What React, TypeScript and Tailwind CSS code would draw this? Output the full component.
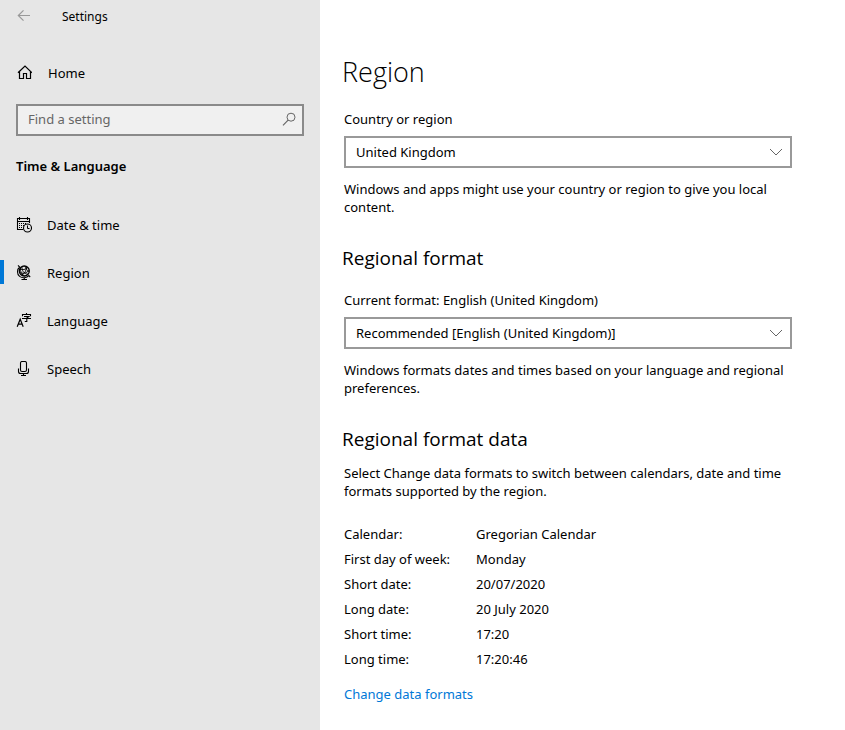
import type { ReactNode } from 'react';

const formats = [
  { label: 'Calendar:', value: 'Gregorian Calendar' },
  { label: 'First day of week:', value: 'Monday' },
  { label: 'Short date:', value: '20/07/2020' },
  { label: 'Long date:', value: '20 July 2020' },
  { label: 'Short time:', value: '17:20' },
  { label: 'Long time:', value: '17:20:46' },
];

function Icon({ children }: { children: ReactNode }) {
  return (
    <svg
      width="16"
      height="16"
      viewBox="0 0 16 16"
      fill="none"
      stroke="currentColor"
      strokeWidth="1"
      className="shrink-0"
      aria-hidden="true"
    >
      {children}
    </svg>
  );
}

function BackIcon() {
  return (
    <Icon>
      <path d="M14 6.5H2.5M7.5 1.3L2.3 6.5L7.5 11.7" strokeWidth="1.2" />
    </Icon>
  );
}

function HomeIcon() {
  return (
    <Icon>
      <path d="M2 7.8L9 1L16 7.8" strokeWidth="1.2" />
      <path d="M3.5 6.5V13.5H7.5V8.5H10.5V13.5H14.5V6.5" strokeWidth="1.2" />
    </Icon>
  );
}

function CalendarIcon() {
  return (
    <Icon>
      <path d="M7 12.5H1.5V1.5H13.5V6M1.5 4.5H13.5M3.5 0V3M11.5 0V3" strokeWidth="1.1" />
      <path d="M3 6.5H4M5 6.5H6M7 6.5H8M9 6.5H10M3 8.5H4M5 8.5H6M7 8.5H8M3 10.5H4M5 10.5H6" />
      <circle cx="11.5" cy="11" r="4" strokeWidth="1.1" />
      <path d="M11.5 8.5V11.5H13.5" />
    </Icon>
  );
}

function GlobeIcon() {
  return (
    <Icon>
      <circle cx="8.3" cy="6" r="5" strokeWidth="1.3" />
      <path
        d="M4 4C6 5.2 10 4.6 11.5 2.7M3.6 7C6 9.3 11 8.2 13 5.2M6 1.7C5.5 5 8 9.2 12 9.2M9 1.2C9.5 3 11 5.7 13 6.7M4.5 3.2C4 6 5.5 9.7 8.5 10.9M10.5 1.8C10.8 5 8.5 9 5.5 10"
        strokeWidth="0.9"
      />
      <path
        d="M2 0.4L3.6 2C0.8 4.4 0.8 9 3.6 11.4C6.5 13.6 10.8 13 12.8 10.6L14.2 12M8.3 13V14.5M5.5 14.5H11"
        strokeWidth="1.1"
      />
    </Icon>
  );
}

function LanguageIcon() {
  return (
    <Icon>
      <path d="M1.2 13.8L4.2 6.2L7.2 13.8M2.4 11.2H6" strokeWidth="1.2" />
      <path d="M10.5 0V1.5M6.5 3.2V1.5H14.5V3.2M8 3.5H12.8L10.8 5V8.5H8.8M6 5.5H15" strokeWidth="1.1" />
    </Icon>
  );
}

function MicIcon() {
  return (
    <Icon>
      <rect x="4.5" y="0.5" width="6" height="10" rx="1.5" strokeWidth="1.1" />
      <path
        d="M2.5 7.5V10.5C2.5 11.8 3.2 12.5 4.5 12.5H10.5C11.8 12.5 12.5 11.8 12.5 10.5V7.5M7.5 12.5V14.5M5 14.5H10"
        strokeWidth="1.1"
      />
    </Icon>
  );
}

function SearchIcon() {
  return (
    <Icon>
      <circle cx="11" cy="6.2" r="4" />
      <path d="M8.1 9.2L3 14.3" strokeWidth="1.2" />
    </Icon>
  );
}

const navItems = [
  { label: 'Date & time', icon: <CalendarIcon />, active: false },
  { label: 'Region', icon: <GlobeIcon />, active: true },
  { label: 'Language', icon: <LanguageIcon />, active: false },
  { label: 'Speech', icon: <MicIcon />, active: false },
];

function Dropdown({ id, value }: { id: string; value: string }) {
  return (
    <div className="relative mt-2">
      <select
        id={id}
        className="block h-8 w-full appearance-none border-2 border-[#999999] bg-white pr-8 pl-2.5 text-black"
      >
        <option>{value}</option>
      </select>
      <svg
        width="14"
        height="8"
        viewBox="0 0 14 8"
        fill="none"
        stroke="#666666"
        className="pointer-events-none absolute top-3 right-[9px]"
        aria-hidden="true"
      >
        <path d="M1 1L7 7L13 1" />
      </svg>
    </div>
  );
}

function Sidebar() {
  return (
    <aside className="w-80 shrink-0 bg-[#e6e6e6]">
      <header className="flex h-[34px] items-center">
        <button type="button" aria-label="Back" className="ml-4 text-[#999999]">
          <BackIcon />
        </button>
        <span className="ml-[30px] text-[12px]">Settings</span>
      </header>

      <a href="#home" className="mt-[15px] flex h-12 items-center gap-4 px-4">
        <HomeIcon />
        Home
      </a>

      <div className="mx-4 mt-[7px] flex h-8 items-center border-2 border-[#8a8a8a] bg-[#f0f0f0] pr-1.5 pb-0.5 pl-2.5 text-[#666666]">
        <input
          type="text"
          aria-label="Find a setting"
          placeholder="Find a setting"
          className="h-[18px] min-w-0 flex-1 bg-transparent outline-none placeholder:text-[#666666]"
        />
        <button type="button" aria-label="Search">
          <SearchIcon />
        </button>
      </div>

      <h2 className="mx-4 mt-5 leading-5 font-semibold">Time &amp; Language</h2>

      <nav className="mt-[25px]">
        {navItems.map((item) => (
          <a key={item.label} href="#" className="flex h-12 items-center">
            <span className={item.active ? 'mb-0.5 h-6 w-1 bg-[#0078d7]' : 'mb-0.5 h-6 w-1'} />
            <span className="mr-[15px] ml-3">{item.icon}</span>
            {item.label}
          </a>
        ))}
      </nav>
    </aside>
  );
}

export default function App() {
  return (
    <div className="flex min-h-screen bg-white font-['Noto_Sans','Open_Sans',sans-serif] text-[13px] leading-[18px] text-black">
      <Sidebar />

      <main className="min-w-0 flex-1 px-6 pt-[54px] pb-6">
        <div className="max-w-[448px]">
          <h1 className="-ml-0.5 font-['Open_Sans',sans-serif] text-[27px] leading-9 font-[350]">Region</h1>

          <label htmlFor="country" className="mt-5 block">
            Country or region
          </label>
          <Dropdown id="country" value="United Kingdom" />
          <p className="mt-3">Windows and apps might use your country or region to give you local content.</p>

          <h2 className="mt-7 -ml-0.5 font-['Open_Sans',sans-serif] text-[19px] leading-7">Regional format</h2>
          <label htmlFor="format" className="mt-[19px] block">
            Current format: English (United Kingdom)
          </label>
          <Dropdown id="format" value="Recommended [English (United Kingdom)]" />
          <p className="mt-3">Windows formats dates and times based on your language and regional preferences.</p>

          <h2 className="mt-7 -ml-0.5 font-['Open_Sans',sans-serif] text-[19px] leading-7">Regional format data</h2>
          <p className="mt-[11px]">
            Select Change data formats to switch between calendars, date and time formats supported by the region.
          </p>

          <table className="mt-[21px]">
            <tbody>
              {formats.map((row) => (
                <tr key={row.label} className="h-[25px]">
                  <th scope="row" className="w-[132px] p-0 text-left font-normal">
                    {row.label}
                  </th>
                  <td className="p-0">{row.value}</td>
                </tr>
              ))}
            </tbody>
          </table>

          <a href="#formats" className="mt-3.5 inline-block text-[#0078d7]">
            Change data formats
          </a>
        </div>
      </main>
    </div>
  );
}
